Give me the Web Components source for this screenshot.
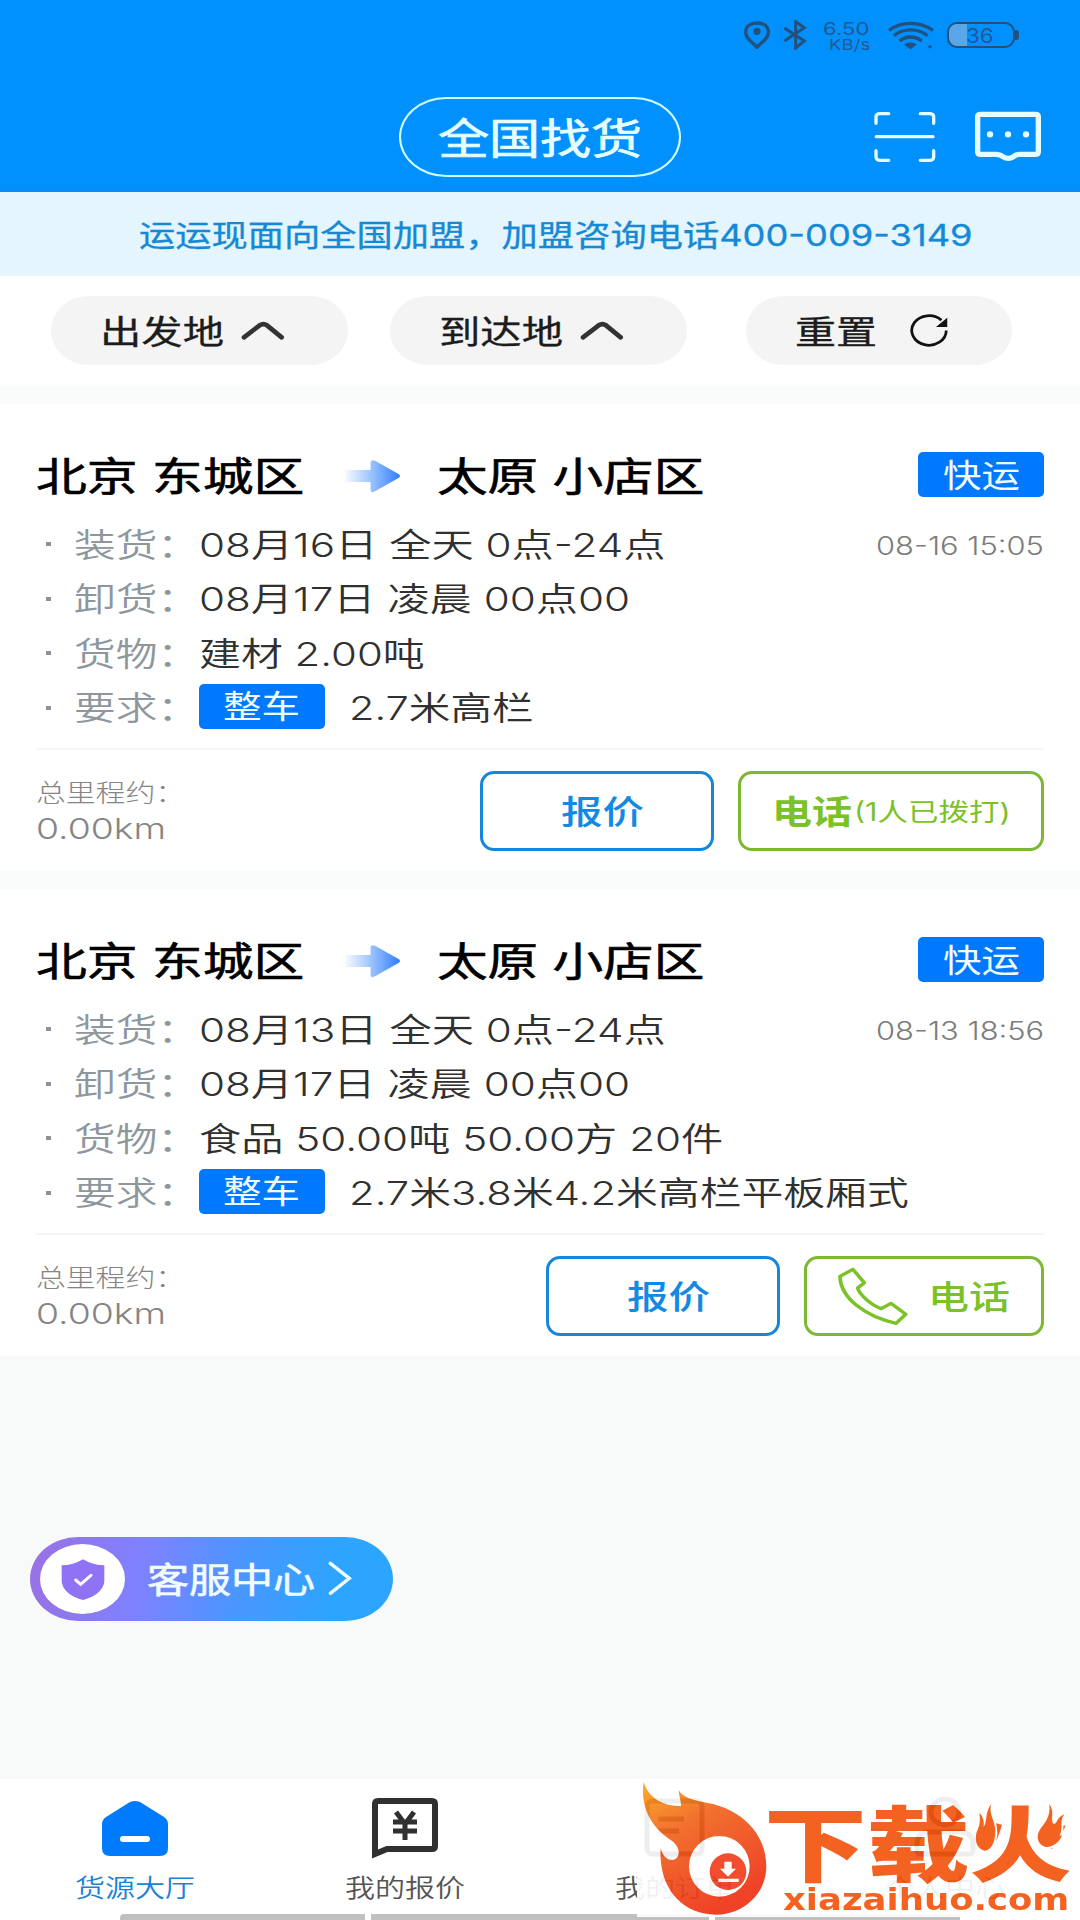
<!DOCTYPE html>
<html lang="zh-CN">
<head>
<meta charset="utf-8">
<title>全国找货</title>
<style>
  body {
    margin: 0;
    width: 1080px;
    height: 1920px;
    overflow: hidden;
    background: #f8f9f9;
    font-family: Inter, "Noto Sans CJK SC", sans-serif;
  }
</style>
</head>
<body>
<freight-app></freight-app>

<script>
// Text set to a fixed width: the glyphs are stretched sideways to fill it.
class WideText extends HTMLElement {
  constructor() {
    super();
    this.attachShadow({ mode: "open" });
    this.shadowRoot.innerHTML = `
      <style>
        :host { display: flex; flex: none; line-height: 1.3; }
        span { flex: none; white-space: nowrap; transform-origin: 0 50%; }
      </style>
      <span><slot></slot></span>
    `;
  }

  connectedCallback() {
    const width = Number(this.getAttribute("w"));
    const size = Number(this.getAttribute("size"));
    this.style.width = `${width}px`;
    this.style.fontSize = `${size}px`;
    const span = this.shadowRoot.querySelector("span");
    span.style.transform = `translateY(${size * 0.045}px) scaleX(${width / span.offsetWidth})`;
  }
}

class StatusBar extends HTMLElement {
  constructor() {
    super();
    this.attachShadow({ mode: "open" });
    this.shadowRoot.innerHTML = `
      <style>
        :host { display: flex; height: 70px; padding-left: 744px; align-items: center; color: #24598f; }
        svg { display: block; flex: none; fill: none; stroke: #24507c; }
        .speed { display: flex; flex-direction: column; align-items: flex-end; margin: 1px 18px 0 15px; width: 48px; }
        .speed wide-text { line-height: 15px; }
        .battery {
          box-sizing: border-box; width: 68px; height: 26px; margin-left: 12px; border: 2.5px solid #24507c;
          border-radius: 10px; display: flex; align-items: center; justify-content: center;
          background: linear-gradient(90deg, #5aa6e8 28%, transparent 28%);
        }
        .battery wide-text { margin-right: 3px; }
        .nub { width: 4px; height: 10px; border-radius: 0 3px 3px 0; background: #24507c; }
      </style>
      <svg width="26" height="28" viewBox="132 61 78 84" stroke-width="10">
        <path d="M171 140C158 124 137 116 137 94C137 76 151 67 171 67C191 67 205 76 205 94C205 116 184 124 171 140Z"/>
        <circle cx="171" cy="92" r="11" fill="#24507c" stroke="none"/>
      </svg>
      <svg style="margin-left:13px" width="24" height="30" viewBox="250 60 72 90" stroke-width="9">
        <path d="M254 84L314 123L288 144V65L314 83L254 123"/>
      </svg>
      <div class="speed">
        <wide-text w="47" size="17">6.50</wide-text>
        <wide-text w="41" size="15">KB/s</wide-text>
      </div>
      <svg width="47" height="29" viewBox="565 60 141 87" stroke-width="10">
        <path d="M568 88C605 60 660 60 700 88M583 104C612 81 653 81 684 104M600 120C619 104 646 104 666 120"/>
        <path d="M614 131C622 122 643 122 651 131L632 145Z" fill="#24507c" stroke="none"/>
        <path d="M683 134h16l-8 9z" fill="#24507c" stroke="none"/>
      </svg>
      <div class="battery"><wide-text w="28" size="20">36</wide-text></div>
      <div class="nub"></div>
    `;
  }
}

class AppHeader extends HTMLElement {
  constructor() {
    super();
    this.attachShadow({ mode: "open" });
    this.shadowRoot.innerHTML = `
      <style>
        :host { display: block; box-sizing: border-box; height: 192px; background: #0091ff; border-bottom: 1.5px solid #1688df; }
        .bar { display: grid; grid-template-columns: 399px 282px 1fr; padding-top: 27px; }
        .title {
          box-sizing: border-box; height: 80px; border: 2.5px solid #d2fdff; border-radius: 47px / 40px;
          display: flex; align-items: center; justify-content: center; color: #e6feff;
        }
        .title wide-text { -webkit-text-stroke: .7px; }
        .tools { display: flex; padding: 13px 0 0 192px; gap: 37px; }
        svg { display: block; fill: none; stroke: #e4fdff; stroke-linecap: round; stroke-linejoin: round; }
      </style>
      <status-bar></status-bar>
      <div class="bar">
        <span></span>
        <div class="title"><wide-text w="204" size="42">全国找货</wide-text></div>
        <div class="tools">
          <svg width="64" height="54" viewBox="518 330 192 162" stroke-width="10">
            <path d="M527 370V350Q527 341 540 341H565M660 341H687Q700 341 700 350V370M527 452V470Q527 481 542 481H565M660 481H686Q700 481 700 470V452M528 410H698"/>
          </svg>
          <svg width="68" height="54" viewBox="822 330 204 162" stroke-width="16">
            <path d="M842 343H1006Q1015 343 1015 350V455Q1015 463 1006 463H958Q948 463 940 470Q925 480 909 470Q900 463 890 463H842Q833 463 833 455V350Q833 343 842 343Z"/>
            <path d="M870 403h.1M924 403h.1M978 403h.1" stroke-width="19"/>
          </svg>
        </div>
      </div>
    `;
  }
}

class FilterPill extends HTMLElement {
  constructor() {
    super();
    this.attachShadow({ mode: "open" });
    this.shadowRoot.innerHTML = `
      <style>
        :host {
          display: flex; box-sizing: border-box; height: 69px; align-items: center; padding-left: 49px;
          background: #f4f4f4; border-radius: 38px / 34px; color: #1c1c1c;
        }
      </style>
      <slot></slot>
    `;
  }
}

class FilterBar extends HTMLElement {
  constructor() {
    super();
    this.attachShadow({ mode: "open" });
    const chevron = `
      <svg width="44" height="20" viewBox="698 390 132 60" fill="none" stroke="#333" stroke-width="14" stroke-linecap="round" stroke-linejoin="round">
        <path d="M707 439L754 403Q765 396 776 403L820 439"/>
      </svg>`;
    this.shadowRoot.innerHTML = `
      <style>
        :host { display: grid; grid-template-columns: 297px 297px 266px; column-gap: 42px; height: 90px; padding: 20px 0 0 51px; background: #fff; }
        filter-pill:last-child { margin-left: 17px; width: 266px; }
        wide-text { -webkit-text-stroke: .3px; margin-top: 2px; }
        svg { margin-left: 17px; }
      </style>
      <filter-pill><wide-text w="124" size="33">出发地</wide-text>${chevron}</filter-pill>
      <filter-pill><wide-text w="124" size="33">到达地</wide-text>${chevron}</filter-pill>
      <filter-pill>
        <wide-text w="82" size="33">重置</wide-text>
        <svg style="margin:1px 0 0 32px" width="40" height="34" viewBox="1070 372 116 99" preserveAspectRatio="none" fill="none" stroke="#111" stroke-width="8">
          <path d="M1178 420A50 43 0 1 1 1164 390"/>
          <path d="M1181 383V410H1148Z" fill="#111" stroke="none"/>
        </svg>
      </filter-pill>
    `;
  }
}

class CargoTag extends HTMLElement {
  constructor() {
    super();
    this.attachShadow({ mode: "open" });
    this.shadowRoot.innerHTML = `
      <style>
        :host {
          display: flex; flex: none; width: 126px; height: 45px; border-radius: 5px;
          align-items: center; justify-content: center; background: #0079fe; color: #f2fcff;
        }
      </style>
      <wide-text w="77" size="32"><slot></slot></wide-text>
    `;
  }
}

class OutlineButton extends HTMLElement {
  constructor() {
    super();
    this.attachShadow({ mode: "open" });
    this.shadowRoot.innerHTML = `
      <style>
        :host {
          display: flex; box-sizing: border-box; height: 80px; border: 3px solid #1686d8; border-radius: 14px;
          align-items: center; justify-content: center; color: #1389e4; font-weight: 500;
        }
        :host([green]) { border-color: #7cb832; color: #7bc128; }
      </style>
      <slot></slot>
    `;
  }
}

class CargoCard extends HTMLElement {
  constructor() {
    super();
    this.attachShadow({ mode: "open" });
  }

  set data(cargo) {
    const rows = cargo.rows
      .map(
        (row) => `
          <div class="row">
            <i></i>
            <wide-text class="label" w="125" size="33">${row.label}：</wide-text>
            ${row.tag ? `<cargo-tag>${row.tag}</cargo-tag>` : ""}
            <wide-text class="value" w="${row.width}" size="33">${row.text}</wide-text>
            ${row.time ? `<wide-text class="time" w="168" size="25">${row.time}</wide-text>` : ""}
          </div>
        `
      )
      .join("");

    const call = cargo.called
      ? `<outline-button green style="width:306px">
          <wide-text w="80" size="33" style="font-weight:700">电话</wide-text>
          <wide-text w="156" size="25" style="font-weight:400;margin-left:2px">${cargo.called}</wide-text>
        </outline-button>`
      : `<outline-button green style="width:240px">
          <svg width="72" height="60" viewBox="910 374 195 180" preserveAspectRatio="none" fill="none" stroke="#7bc128" stroke-width="10" stroke-linejoin="round">
            <path d="M918 405L953 384L984 424L966 440C970 458 1000 490 1030 502L1056 486L1096 519L1070 546C985 525 920 470 918 405Z"/>
          </svg>
          <wide-text w="82" size="33" style="margin:0 1px 0 19px">电话</wide-text>
        </outline-button>`;

    this.shadowRoot.innerHTML = `
      <style>
        :host { display: block; box-sizing: border-box; height: 467px; padding: 48px 36px 0; background: #fff; }
        .route { display: flex; align-items: center; height: 45px; color: #000; }
        .route > wide-text { -webkit-text-stroke: .6px; }
        .route svg { margin: 4px 35px 0 40px; flex: none; }
        .route cargo-tag { margin-left: auto; }
        .rows { padding-top: 20px; }
        .row { display: flex; align-items: center; height: 54.5px; color: #303030; }
        .row i { width: 5px; height: 4px; margin: 0 22.5px 0 10px; background: #8b9298; }
        .label { color: #8e979e; font-weight: 330; }
        .value { font-weight: 350; }
        .row cargo-tag { margin: -3px 24.5px 0 0; }
        .time { margin: 1px 0 0 auto; color: #7c7c7c; font-weight: 300; }
        .foot { display: flex; margin-top: 13px; padding-top: 21px; border-top: 2px solid #f6f6f6; gap: 24px; }
        .distance { display: flex; flex-direction: column; margin-right: auto; padding-top: 3px; color: #858585; font-weight: 300; }
        .distance wide-text { line-height: 36px; }
        .quote { width: 234px; padding-left: 10px; }
      </style>
      <div class="route">
        <wide-text w="268" size="40">${cargo.from}</wide-text>
        <svg width="58" height="35" viewBox="0 0 57 35">
          <defs><linearGradient id="g"><stop offset="0" stop-color="#3f8dff" stop-opacity=".05"/><stop offset="1" stop-color="#2f7dff"/></linearGradient></defs>
          <path d="M1 11H26V4Q26 0 31 2L54 15Q57 17 54 19L31 32Q26 35 26 30V23H1Z" fill="url(#g)"/>
        </svg>
        <wide-text w="267" size="40">${cargo.to}</wide-text>
        <cargo-tag>${cargo.kind}</cargo-tag>
      </div>
      <div class="rows">${rows}</div>
      <div class="foot">
        <div class="distance">
          <wide-text w="149" size="25">总里程约：</wide-text>
          <wide-text w="130" size="29">${cargo.distance}</wide-text>
        </div>
        <outline-button class="quote"><wide-text w="83" size="33">报价</wide-text></outline-button>
        ${call}
      </div>
    `;
  }
}

class ServiceButton extends HTMLElement {
  constructor() {
    super();
    this.attachShadow({ mode: "open" });
    this.shadowRoot.innerHTML = `
      <style>
        :host {
          display: flex; align-items: center; box-sizing: border-box; width: 363px; height: 84px; padding-left: 10px;
          border-radius: 48px / 42px; color: #f1fcff;
          background: linear-gradient(100deg, #9673e6 5%, #7d82ff 32%, #4b96ff 57%, #2ca5ff 84%);
        }
        .badge { display: flex; align-items: center; justify-content: center; width: 85px; height: 70px; border-radius: 50%; background: #fff; }
        wide-text { margin: 0 13px 0 22px; -webkit-text-stroke: .6px; }
      </style>
      <div class="badge">
        <svg width="44" height="41" viewBox="182 148 132 123">
          <path d="M248 149Q278 167 312 167V212C312 245 275 265 248 271C221 265 184 245 184 212V167Q218 167 248 149Z" fill="#9073f5"/>
          <path d="M226 211L241 224L272 197" fill="none" stroke="#fff" stroke-width="9" stroke-linecap="round"/>
        </svg>
      </div>
      <wide-text w="168" size="35">客服中心</wide-text>
      <svg width="24" height="36" viewBox="987 155 72 108" fill="none" stroke="#f1fcff" stroke-width="10" stroke-linecap="round">
        <path d="M994 162L1051 207L994 252"/>
      </svg>
    `;
  }
}

class TabItem extends HTMLElement {
  constructor() {
    super();
    this.attachShadow({ mode: "open" });
    this.shadowRoot.innerHTML = `
      <style>
        :host { display: flex; flex-direction: column; align-items: center; padding-top: 18px; color: #555; font-weight: 350; }
        :host([active]) { color: #1b82d6; }
        ::slotted(svg) { display: block; margin-bottom: 12px; }
      </style>
      <slot></slot>
    `;
  }
}

class TabBar extends HTMLElement {
  constructor() {
    super();
    this.attachShadow({ mode: "open" });
    this.shadowRoot.innerHTML = `
      <style>
        :host { display: grid; grid-template: 135px 6px / repeat(4, 1fr); height: 141px; background: #fff; }
        .home { grid-column: 1 / -1; display: flex; gap: 6px; padding-left: 120px; }
        .home i { height: 6px; width: 245px; background: #c0c0c0; border-radius: 4px 0 0 0; }
        .home i + i { width: 338px; border-radius: 0; }
        .home i + i + i { width: 245px; }
      </style>
      <tab-item active>
        <svg width="68" height="62" viewBox="101 1796 68 62">
          <path d="M130 1801Q135 1799 140 1801L164 1816Q168 1819 168 1823V1847Q168 1855 160 1855H110Q102 1855 102 1847V1823Q102 1819 106 1816Z" fill="#007bfe"/>
          <path d="M123 1838H147" stroke="#fff" stroke-width="6" stroke-linecap="round"/>
        </svg>
        <wide-text w="120" size="25">货源大厅</wide-text>
      </tab-item>
      <tab-item>
        <svg width="68" height="62" viewBox="371 1797 68 62" fill="none" stroke="#303030" stroke-width="6">
          <path d="M375 1854V1804Q375 1801 378 1801H432Q435 1801 435 1804V1846Q435 1849 432 1849H387Z"/>
          <path d="M396 1812L405 1824L414 1812M405 1824V1840M393 1822H417M393 1831H417" stroke-width="5"/>
        </svg>
        <wide-text w="120" size="25">我的报价</wide-text>
      </tab-item>
      <tab-item>
        <svg width="62" height="62" viewBox="0 0 62 62" fill="none" stroke="#303030" stroke-width="5">
          <rect x="3" y="4" width="55" height="53" rx="5"/>
          <path d="M14 22H40M14 34H35"/>
        </svg>
        <wide-text w="120" size="25">我的订单</wide-text>
      </tab-item>
      <tab-item>
        <svg width="62" height="62" viewBox="0 0 62 62" fill="none" stroke="#303030" stroke-width="5">
          <ellipse cx="31" cy="15" rx="14" ry="13"/>
          <path d="M3 54V47Q3 35 16 35H46Q59 35 59 47V54Q59 57 55 57H7Q3 57 3 54Z"/>
        </svg>
        <wide-text w="120" size="25">个人中心</wide-text>
      </tab-item>
      <div class="home"><i></i><i></i><i></i></div>
    `;
  }
}

// Site stamp laid over the right half of the tab bar.
class SiteStamp extends HTMLElement {
  constructor() {
    super();
    this.attachShadow({ mode: "open" });
    this.shadowRoot.innerHTML = `
      <style>
        :host { display: flex; box-sizing: border-box; width: 443px; height: 138px; padding-left: 4px; background: #fff; opacity: .92; color: #f2540c; font-weight: 900; }
        .flame { flex: none; margin-top: 1px; }
        .name { display: flex; flex-direction: column; align-items: flex-end; padding-top: 17px; position: relative; width: 302px; }
        .name wide-text:first-of-type { line-height: 92px; align-self: flex-start; margin-left: -4px; }
        .name wide-text:last-of-type { margin-right: 1px; line-height: 28px; font-weight: 700; margin-top: -3px; font-family: "DejaVu Sans", sans-serif; }
        .sparks { position: absolute; left: 206px; top: 24px; }
      </style>
      <svg class="flame" width="127" height="136" viewBox="123 60 381 408">
        <defs><linearGradient id="f" x1="0" y1="0" x2=".5" y2="1">
          <stop offset="0" stop-color="#ffa51d"/><stop offset=".4" stop-color="#f0631d"/><stop offset="1" stop-color="#ef3214"/>
        </linearGradient></defs>
        <path d="M131 65C145 115 190 138 243 138C243 120 236 105 236 90C246 112 280 121 320 128C425 146 499 222 499 318C499 400 432 464 347 464C252 464 174 390 182 263C187 290 207 305 225 298C244 287 238 256 212 240C145 196 121 130 131 65Z" fill="url(#f)"/>
        <circle cx="358" cy="319" r="91" fill="#fff"/>
        <circle cx="384" cy="335" r="55" fill="#ef3f1c"/>
        <path d="M373 305H395V326H408L384 350L360 326H373ZM355 356H416V366H355Z" fill="#fff"/>
      </svg>
      <div class="name">
        <wide-text w="308" size="82">下载火</wide-text>
        <wide-text w="286" size="30">xiazaihuo.com</wide-text>
        <svg class="sparks" width="92" height="48" viewBox="1135 130 276 144" fill="#f2540c" stroke="#fff" stroke-width="12" paint-order="stroke">
          <path d="M1187 133C1176 165 1206 190 1198 230C1194 260 1181 272 1168 273C1147 270 1136 248 1142 221C1146 207 1157 197 1151 160C1162 170 1166 186 1164 201C1176 187 1166 160 1187 133Z"/>
          <path d="M1361 133C1379 158 1362 178 1374 194C1387 190 1382 174 1406 164C1390 184 1404 204 1392 228C1397 228 1400 226 1400 224C1392 250 1370 263 1350 262C1328 257 1319 232 1332 211C1345 192 1366 174 1361 133Z"/>
        </svg>
      </div>
    `;
  }
}

class FreightApp extends HTMLElement {
  constructor() {
    super();
    this.attachShadow({ mode: "open" });
    this.shadowRoot.innerHTML = `
      <style>
        :host { display: flex; flex-direction: column; position: relative; width: 1080px; height: 1920px; background: #f8f9f9; }
        .notice { display: flex; align-items: center; height: 84px; padding-left: 139px; background: #e4f5fe; color: #1689d5; }
        .notice wide-text { -webkit-text-stroke: .3px; }
        .list { display: grid; gap: 18px; padding-top: 18px; background: #fafbfb; }
        tab-bar { margin-top: auto; }
        service-button { position: absolute; left: 30px; top: 1537px; }
        site-stamp { position: absolute; left: 637px; top: 1779px; }
      </style>
      <app-header></app-header>
      <div class="notice"><wide-text w="834" size="30">运运现面向全国加盟，加盟咨询电话400-009-3149</wide-text></div>
      <filter-bar></filter-bar>
      <div class="list"></div>
      <tab-bar></tab-bar>
      <service-button></service-button>
      <site-stamp></site-stamp>
    `;
  }

  connectedCallback() {
    const list = this.shadowRoot.querySelector(".list");
    cargos.forEach((cargo) => {
      const card = document.createElement("cargo-card");
      list.appendChild(card);
      card.data = cargo;
    });
  }
}

const cargos = [
  {
    from: "北京 东城区",
    to: "太原 小店区",
    kind: "快运",
    rows: [
      { label: "装货", text: "08月16日 全天 0点-24点", width: 467, time: "08-16 15:05" },
      { label: "卸货", text: "08月17日 凌晨 00点00", width: 431 },
      { label: "货物", text: "建材 2.00吨", width: 226 },
      { label: "要求", tag: "整车", text: "2.7米高栏", width: 185 },
    ],
    distance: "0.00km",
    called: "(1人已拨打)",
  },
  {
    from: "北京 东城区",
    to: "太原 小店区",
    kind: "快运",
    rows: [
      { label: "装货", text: "08月13日 全天 0点-24点", width: 467, time: "08-13 18:56" },
      { label: "卸货", text: "08月17日 凌晨 00点00", width: 431 },
      { label: "货物", text: "食品 50.00吨 50.00方 20件", width: 524 },
      { label: "要求", tag: "整车", text: "2.7米3.8米4.2米高栏平板厢式", width: 560 },
    ],
    distance: "0.00km",
  },
];

customElements.define("wide-text", WideText);
customElements.define("status-bar", StatusBar);
customElements.define("app-header", AppHeader);
customElements.define("filter-pill", FilterPill);
customElements.define("filter-bar", FilterBar);
customElements.define("cargo-tag", CargoTag);
customElements.define("outline-button", OutlineButton);
customElements.define("cargo-card", CargoCard);
customElements.define("service-button", ServiceButton);
customElements.define("tab-item", TabItem);
customElements.define("tab-bar", TabBar);
customElements.define("site-stamp", SiteStamp);
customElements.define("freight-app", FreightApp);
</script>
</body>
</html>
